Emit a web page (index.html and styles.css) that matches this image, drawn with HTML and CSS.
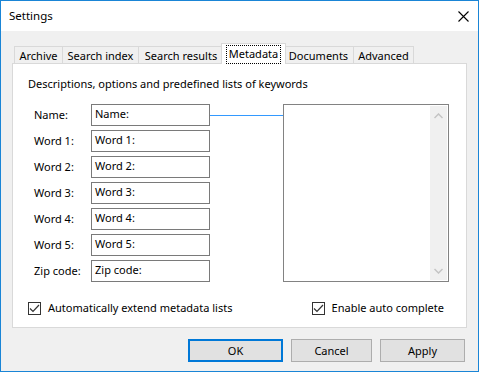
FILE: index.html
```html
<!DOCTYPE html>
<html lang="en">
<head>
    <meta charset="UTF-8">
    <title>Settings</title>
    <link rel="stylesheet" href="styles.css">
</head>
<body>
    <div class="window">
        <div class="titlebar">
            <span class="title">Settings</span>
            <svg class="close" width="11" height="11" viewBox="0 0 11 11">
                <path d="M0.5 0.5 L10.5 10.5 M10.5 0.5 L0.5 10.5" stroke="#000" stroke-width="1.1" fill="none"/>
            </svg>
        </div>

        <div class="content">
            <div class="tabs">
                <div class="tab tab-archive">Archive</div>
                <div class="tab tab-index">Search index</div>
                <div class="tab tab-results">Search results</div>
                <div class="tab tab-meta selected"><span class="focus">Metadata</span></div>
                <div class="tab tab-docs">Documents</div>
                <div class="tab tab-adv">Advanced</div>
            </div>

            <div class="panel">
                <p class="description">Descriptions, options and predefined lists of keywords</p>

                <div class="fields">
                    <label class="field-label">Name:</label>
                    <div class="textbox">Name:</div>
                    <div class="connector"></div>
                    <div class="listbox">
                        <div class="scrollbar">
                            <svg width="9" height="6" viewBox="0 0 9 6"><path d="M0.5 5 L4.5 1 L8.5 5" stroke="#c4c4c4" stroke-width="1.5" fill="none"/></svg>
                            <svg width="9" height="6" viewBox="0 0 9 6"><path d="M0.5 1 L4.5 5 L8.5 1" stroke="#c4c4c4" stroke-width="1.5" fill="none"/></svg>
                        </div>
                    </div>

                    <label class="field-label">Word 1:</label>
                    <div class="textbox">Word 1:</div>

                    <label class="field-label">Word 2:</label>
                    <div class="textbox">Word 2:</div>

                    <label class="field-label">Word 3:</label>
                    <div class="textbox">Word 3:</div>

                    <label class="field-label">Word 4:</label>
                    <div class="textbox">Word 4:</div>

                    <label class="field-label">Word 5:</label>
                    <div class="textbox">Word 5:</div>

                    <label class="field-label">Zip code:</label>
                    <div class="textbox">Zip code:</div>
                </div>

                <div class="checks">
                    <div class="check">
                        <span class="checkbox"><svg width="11" height="11" viewBox="0 0 11 11"><path d="M1 5.5 L4 8.5 L10 2" stroke="#333" stroke-width="1.2" fill="none"/></svg></span>
                        Automatically extend metadata lists
                    </div>
                    <div class="check">
                        <span class="checkbox"><svg width="11" height="11" viewBox="0 0 11 11"><path d="M1 5.5 L4 8.5 L10 2" stroke="#333" stroke-width="1.2" fill="none"/></svg></span>
                        Enable auto complete
                    </div>
                </div>
            </div>

            <div class="buttons">
                <button class="btn btn-ok">OK</button>
                <button class="btn btn-cancel">Cancel</button>
                <button class="btn btn-apply">Apply</button>
            </div>
        </div>
    </div>
</body>
</html>
```

FILE: styles.css
```css
* {
    margin: 0;
    padding: 0;
    box-sizing: border-box;
}

body {
    font-family: 'Noto Sans', 'Open Sans', sans-serif;
    font-size: 11px;
    line-height: 16px;
    color: #000;
    background: #fff;
}

.window {
    width: 479px;
    height: 372px;
    border: 1px solid #1a85d6;
    background: #f0f0f0;
}

.titlebar {
    height: 30px;
    background: #fff;
    display: flex;
    align-items: center;
    justify-content: space-between;
    padding: 0 9px 0 8px;
    font-size: 11.5px;
}

.content {
    padding: 12px 11px 0 11px;
}

/* tabs */
.tabs {
    display: flex;
    align-items: flex-end;
    height: 21px;
    padding-left: 2px;
    margin-bottom: -1px;
}

.tab {
    height: 17px;
    margin-bottom: 1px;
    margin-left: -1px;
    border: 1px solid #d9d9d9;
    border-bottom: none;
    background: #f0f0f0;
    text-align: center;
    line-height: 17px;
    white-space: nowrap;
}

.tab-archive { width: 49px; margin-left: 0; }
.tab-index { width: 77px; }
.tab-results { width: 86px; }
.tab-docs { width: 71px; margin-left: -3px; }
.tab-adv { width: 61px; }

.tab.selected {
    position: relative;
    z-index: 1;
    width: 65px;
    height: 21px;
    margin-bottom: 0;
    margin-left: -3px;
    background: #fff;
    padding-top: 1px;
}

.focus {
    display: inline-block;
    outline: 1px dotted #000;
    padding: 0 2px;
    height: 17px;
    line-height: 16px;
}

/* panel */
.panel {
    height: 265px;
    background: #fff;
    border: 1px solid #d9d9d9;
    padding: 12px 15px 0 15px;
}

.description {
    height: 16px;
}

.fields {
    display: grid;
    grid-template-columns: 57px 119px 73px 166px;
    grid-auto-rows: 22px;
    row-gap: 4px;
    margin: 12px 0 0 6px;
}

.field-label {
    grid-column: 1;
    align-self: center;
}

.textbox {
    grid-column: 2;
    border: 1px solid #7a7a7a;
    padding: 0 3px;
    line-height: 17px;
    background: #fff;
}

.connector {
    grid-column: 3;
    grid-row: 1;
    height: 1px;
    margin-top: 11px;
    background: #3399ff;
}

.listbox {
    grid-column: 4;
    grid-row: 1 / span 7;
    border: 1px solid #828282;
    display: flex;
    justify-content: flex-end;
    padding: 1px 1px 1px 0;
}

.scrollbar {
    width: 17px;
    background: #f0f0f0;
    display: flex;
    flex-direction: column;
    justify-content: space-between;
    align-items: center;
    padding: 7px 0 6px 0;
}

.scrollbar svg {
    display: block;
}

/* checkboxes */
.checks {
    display: flex;
    justify-content: space-between;
    margin-top: 18px;
    padding-right: 7px;
}

.check {
    display: flex;
    align-items: center;
    gap: 7px;
}

.checkbox {
    width: 13px;
    height: 13px;
    border: 1px solid #333;
    display: flex;
    align-items: center;
    justify-content: center;
}

/* buttons */
.buttons {
    display: flex;
    justify-content: flex-end;
    gap: 8px;
    margin-top: 11px;
    padding-right: 2px;
}

.btn {
    height: 23px;
    font-family: inherit;
    font-size: 11px;
    color: #000;
    background: #e1e1e1;
    border: 1px solid #adadad;
}

.btn-ok {
    width: 95px;
    border: 2px solid #0078d7;
}

.btn-cancel { width: 81px; }
.btn-apply { width: 85px; }
```
